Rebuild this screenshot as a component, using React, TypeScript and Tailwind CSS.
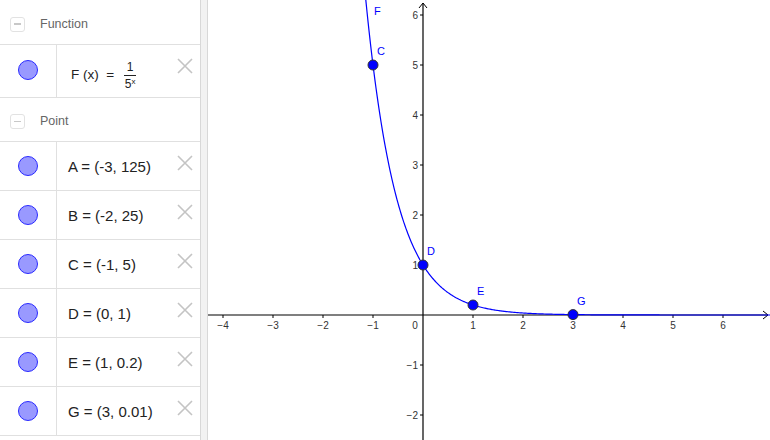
import React from "react";

const points = [
  { name: "A", text: "A = (-3, 125)" },
  { name: "B", text: "B = (-2, 25)" },
  { name: "C", text: "C = (-1, 5)" },
  { name: "D", text: "D = (0, 1)" },
  { name: "E", text: "E = (1, 0.2)" },
  { name: "G", text: "G = (3, 0.01)" },
];

const OX = 215;
const OY = 315;
const U = 50;

function Dot() {
  return <span className="h-[20px] w-[20px] rounded-full border-[1.5px] border-[#2a2aff] bg-[#9999ff]" />;
}

function Close() {
  return (
    <svg width="16" height="16" viewBox="0 0 16 16" className="shrink-0">
      <path d="M1 1 L15 15 M15 1 L1 15" stroke="#c4c4c4" strokeWidth="1.6" />
    </svg>
  );
}

function GroupHeader({ label, h }: { label: string; h: string }) {
  return (
    <div className={`flex items-center border-b border-[#e0e0e0] pt-[4px] ${h}`}>
      <span className="ml-[10px] flex h-[15px] w-[15px] items-center justify-center rounded-[3px] border border-[#e2e2e2]">
        <span className="h-[1.5px] w-[7px] bg-[#c8c8c8]" />
      </span>
      <span className="ml-[15px] text-[12.5px] text-[#666]">{label}</span>
    </div>
  );
}

function Graph() {
  const path: string[] = [];
  for (let px = 150; px <= 562; px += 1) {
    const x = (px - OX) / U;
    const py = OY - U * Math.pow(5, -x);
    if (py < -20) continue;
    path.push(`${path.length ? "L" : "M"}${px} ${py.toFixed(2)}`);
  }
  const xs = [-4, -3, -2, -1, 1, 2, 3, 4, 5, 6];
  const ys = [6, 5, 4, 3, 2, 1, -1, -2];
  const pts = [
    { l: "C", x: -1, y: 5 },
    { l: "D", x: 0, y: 1 },
    { l: "E", x: 1, y: 0.2 },
    { l: "G", x: 3, y: 0.008 },
  ];
  return (
    <svg width="562" height="440" viewBox="0 0 562 440" className="block" style={{ fontFamily: "'Liberation Sans', Arial, sans-serif" }}>
      {/* axes */}
      <line x1="0" y1={OY} x2="560" y2={OY} stroke="#000" strokeWidth="1.2" />
      <path d="M555 311 L560 315 L555 319" fill="none" stroke="#000" strokeWidth="1" />
      <line x1={OX} y1="3" x2={OX} y2="440" stroke="#000" strokeWidth="1.2" />
      <path d="M211 8 L215 3 L219 8" fill="none" stroke="#000" strokeWidth="1" />
      {xs.map((v) => (
        <g key={v}>
          <line x1={OX + v * U} y1={OY} x2={OX + v * U} y2={OY + 3} stroke="#000" />
          <text x={OX + v * U} y={OY + 14} fontSize="10" fill="#333" textAnchor="middle">
            {v < 0 ? `\u2212${-v}` : v}
          </text>
        </g>
      ))}
      <text x={OX - 8} y={OY + 14} fontSize="10" fill="#333" textAnchor="middle">0</text>
      {ys.map((v) => (
        <g key={v}>
          <line x1={OX - 3} y1={OY - v * U} x2={OX} y2={OY - v * U} stroke="#000" />
          <text x={OX - 5} y={OY - v * U + 4} fontSize="10" fill="#333" textAnchor="end">
            {v < 0 ? `\u2212${-v}` : v}
          </text>
        </g>
      ))}
      <path d={path.join(" ")} fill="none" stroke="#0000ff" strokeWidth="1.2" />
      <text x="166" y="15" fontSize="11" fill="#0000ff">F</text>
      {pts.map((p) => {
        const cx = OX + p.x * U;
        const cy = OY - p.y * U;
        return (
          <g key={p.l}>
            <circle cx={cx} cy={cy} r="5" fill="#0000ff" stroke="#333" strokeWidth="1" />
            <text x={cx + 4} y={cy - 10} fontSize="11" fill="#0000ff">{p.l}</text>
          </g>
        );
      })}
    </svg>
  );
}

export default function App() {
  return (
    <div className="flex h-[440px] w-[770px] overflow-hidden bg-white" style={{ fontFamily: "'Liberation Sans', Arial, sans-serif" }}>
      <div className="flex w-[200px] shrink-0 flex-col">
        <GroupHeader label="Function" h="h-[45px]" />
        <div className="flex h-[53px] border-b border-[#e0e0e0]">
          <div className="flex w-[57px] shrink-0 items-center justify-center border-r border-[#e0e0e0] pb-[2px]">
            <Dot />
          </div>
          <div className="flex flex-1 items-start">
            <div className="ml-[14px] mt-[16px] flex items-center text-[13.5px] text-[#222]">
              <span className="whitespace-pre">F (x)  =</span>
              <span className="ml-[10px] flex flex-col items-center leading-none">
                <span className="text-[12px]">1</span>
                <span className="my-[2px] h-px w-[12px] bg-[#222]" />
                <span className="text-[12px]">
                  5<sup className="text-[8px]">x</sup>
                </span>
              </span>
            </div>
            <div className="ml-auto mr-[7px] mt-[13px]">
              <Close />
            </div>
          </div>
        </div>
        <GroupHeader label="Point" h="h-[44px]" />
        {points.map((p) => (
          <div key={p.name} className="flex h-[49px] shrink-0 border-b border-[#e0e0e0]">
            <div className="flex w-[57px] shrink-0 items-center justify-center border-r border-[#e0e0e0]">
              <Dot />
            </div>
            <div className="flex flex-1 items-start">
              <span className="ml-[11px] mt-[14px] text-[15px] text-[#222]">{p.text}</span>
              <div className="ml-auto mr-[7px] mt-[13px]">
                <Close />
              </div>
            </div>
          </div>
        ))}
      </div>
      <div className="w-[8px] shrink-0 border-x border-[#d8d8d8] bg-[#f2f2f2]" />
      <Graph />
    </div>
  );
}
